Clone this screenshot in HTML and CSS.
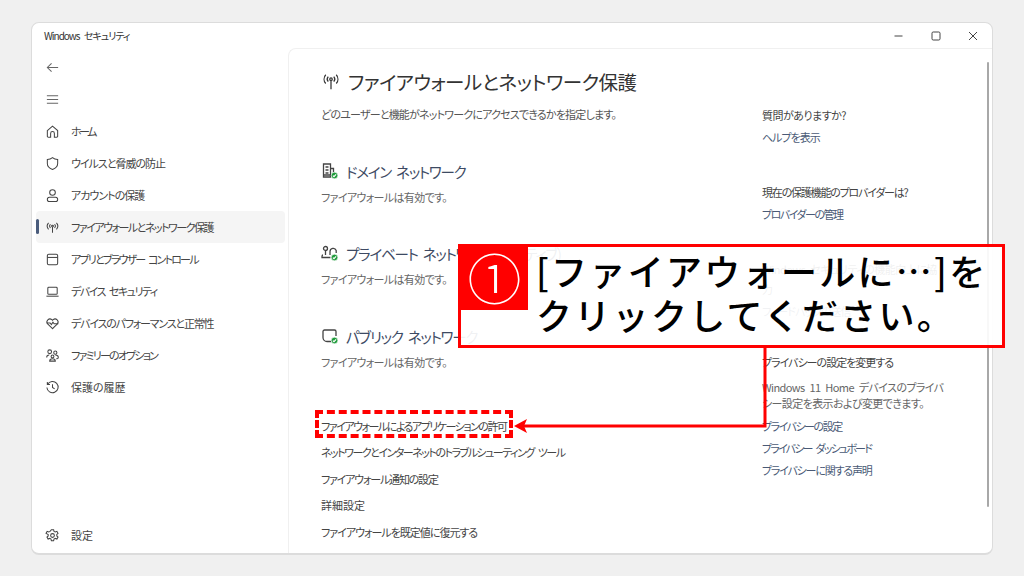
FILE: index.html
```html
<!DOCTYPE html>
<html lang="ja">
<head>
  <meta charset="UTF-8"/>
  <title>Windows セキュリティ</title>
  <link rel="stylesheet" href="styles.css">
</head>
<body>

<div class="window">
  <!-- title bar -->
  <header class="titlebar">
    <span class="app-title">Windows セキュリティ</span>
    <div class="controls">
      <svg class="ctl" viewBox="0 0 12 12"><path d="M1.500 6h8"/></svg>
      <svg class="ctl" viewBox="0 0 12 12"><rect x="2" y="2" width="8" height="8" rx="1.200"/></svg>
      <svg class="ctl" viewBox="0 0 12 12"><path d="M2 2l8 8M10 2l-8 8"/></svg>
    </div>
  </header>

  <div class="body">
    <!-- sidebar -->
    <nav class="sidebar">
      <div class="nav-row"><svg class="ico thin" viewBox="0 0 16 16"><path d="M14 8H3M7 3.500L2.500 8 7 12.500"/></svg></div>
      <div class="nav-row"><svg class="ico thin" viewBox="0 0 16 16"><path d="M2 4h12M2 8h12M2 12h12"/></svg></div>
      <div class="nav-row"><svg class="ico" viewBox="0 0 16 16"><path d="M2.500 7L8 2.200 13.500 7v6a1.200 1.200 0 0 1-1.200 1.200H10V10a2 2 0 0 0-4 0v4.200H3.700A1.200 1.200 0 0 1 2.500 13z"/></svg><span class="ls25">ホーム</span></div>
      <div class="nav-row"><svg class="ico" viewBox="0 0 16 16"><path d="M8 1.800c1.600 1.300 3.400 1.900 5.500 2V8c0 3-2 5-5.500 6.300C4.500 13 2.500 11 2.500 8V3.800c2.100-.1 3.900-.7 5.500-2z"/></svg><span class="ls10">ウイルスと脅威の防止</span></div>
      <div class="nav-row"><svg class="ico" viewBox="0 0 16 16"><circle cx="8" cy="4.800" r="3"/><rect x="2.500" y="9.800" width="11" height="4.700" rx="2.300"/></svg><span class="ls10">アカウントの保護</span></div>
      <div class="nav-row active"><svg class="ico" viewBox="0 0 16 16"><circle cx="8" cy="6.500" r="1"/><path d="M8 7.500v6M5.800 4.500a3 3 0 0 0 0 4M10.200 4.500a3 3 0 0 1 0 4M3.800 3a5.300 5.300 0 0 0 0 7M12.200 3a5.300 5.300 0 0 1 0 7"/></svg><span class="ls15">ファイアウォールとネットワーク保護</span></div>
      <div class="nav-row"><svg class="ico" viewBox="0 0 16 16"><rect x="2.500" y="2.500" width="11" height="11" rx="1.500"/><path d="M2.500 5.800h11"/></svg><span class="ls18">アプリとブラウザー コントロール</span></div>
      <div class="nav-row"><svg class="ico" viewBox="0 0 16 16"><rect x="3" y="3.500" width="10" height="7.500" rx="1"/><path d="M1.500 13h13"/></svg><span class="ls15">デバイス セキュリティ</span></div>
      <div class="nav-row"><svg class="ico" viewBox="0 0 16 16"><path d="M8 13.500L2.800 8.400a3.200 3.200 0 0 1 4.500-4.500l.7.700.7-.7a3.200 3.200 0 0 1 4.500 4.500z"/><path d="M1.800 7.500h3.700l1.300 1.700 1.700-2.600 1.200 1.600h4.500"/></svg><span class="ls12">デバイスのパフォーマンスと正常性</span></div>
      <div class="nav-row"><svg class="ico" viewBox="0 0 16 16"><circle cx="5" cy="4" r="2"/><circle cx="11" cy="5" r="1.700"/><circle cx="8" cy="9" r="1.500"/><path d="M1.800 10c0-1.500 1-2.500 2.700-2.500M5 14c0-1.500 1.300-2.500 3-2.500s3 1 3 2.500zM11 7.500c2 0 3.200 1 3.200 2.500 0 1-1 1.500-2.200 1.500"/></svg><span class="ls18">ファミリーのオプション</span></div>
      <div class="nav-row"><svg class="ico" viewBox="0 0 16 16"><path d="M2.800 4.500A6 6 0 1 1 2 8M2.500 2v2.800h2.800M8 4.500V8l2.300 1.500"/></svg><span>保護の履歴</span></div>
      <div class="nav-row settings"><svg class="ico" viewBox="0 0 16 16"><circle cx="8" cy="8" r="2"/><path d="M6.800 1.800h2.400l.4 1.800 1.400.7 1.700-.7 1.200 2.100-1.300 1.200v1.600l1.300 1.200-1.200 2.100-1.700-.7-1.400.7-.4 1.800H6.800l-.4-1.800-1.400-.7-1.700.7-1.200-2.100 1.300-1.200V6.900L1.100 5.700l1.200-2.100 1.700.7 1.400-.7z"/></svg><span>設定</span></div>
    </nav>

    <!-- page -->
    <main class="panel">
      <div class="col-main">
        <h1 class="page-title">
          <svg class="title-ico" viewBox="0 0 16 16"><circle cx="8" cy="6.500" r="1"/><path d="M8 7.500v7M5.800 4.500a3 3 0 0 0 0 4M10.200 4.500a3 3 0 0 1 0 4M3.800 3a5.300 5.300 0 0 0 0 7M12.200 3a5.300 5.300 0 0 1 0 7"/></svg>
          <span>ファイアウォールとネットワーク保護</span>
        </h1>
        <p class="desc">どのユーザーと機能がネットワークにアクセスできるかを指定します。</p>

        <section class="net net-first">
          <h2>
            <svg class="net-ico" viewBox="0 0 18 18"><path d="M2.500 2h7v13h-7zM9.500 6.500h3v4"/><path d="M4.500 5h3M4.500 8h3M4.500 11h3M2.500 13h7"/><circle class="ok" cx="13.500" cy="13.500" r="3.300"/><path class="tick" d="M11.900 13.600l1.100 1.100 2.100-2.300"/></svg>
            <span>ドメイン ネットワーク</span>
          </h2>
          <p class="sub">ファイアウォールは有効です。</p>
        </section>
        <section class="net">
          <h2>
            <svg class="net-ico" viewBox="0 0 18 18"><circle cx="4.500" cy="4.500" r="2"/><path d="M4.500 6.500v4.500M2 11c-.8 0-1 .6-1 1.500v1h8.500M9 11V7.500a3.200 3.200 0 0 1 6.200-1V9"/><circle class="ok" cx="13.500" cy="13.500" r="3.300"/><path class="tick" d="M11.900 13.600l1.100 1.100 2.100-2.300"/></svg>
            <span>プライベート ネットワーク (アクティブ)</span>
          </h2>
          <p class="sub">ファイアウォールは有効です。</p>
        </section>
        <section class="net">
          <h2>
            <svg class="net-ico" viewBox="0 0 18 18"><path d="M10 14.500H6A4 4 0 0 1 2 10.500V4.500A1.500 1.500 0 0 1 3.500 3h10A1.500 1.500 0 0 1 15 4.500V9"/><circle class="ok" cx="13.500" cy="13.500" r="3.300"/><path class="tick" d="M11.900 13.600l1.100 1.100 2.100-2.300"/></svg>
            <span>パブリック ネットワーク</span>
          </h2>
          <p class="sub">ファイアウォールは有効です。</p>
        </section>

        <ul class="links">
          <li class="ls15">ファイアウォールによるアプリケーションの許可</li>
          <li class="ls15">ネットワークとインターネットのトラブルシューティング ツール</li>
          <li class="ls12">ファイアウォール通知の設定</li>
          <li>詳細設定</li>
          <li class="ls10">ファイアウォールを既定値に復元する</li>
        </ul>
      </div>

      <aside class="col-side">
        <h3 class="ls5">質問がありますか?</h3>
        <a class="ls10">ヘルプを表示</a>
        <h3 class="gap ls12">現在の保護機能のプロバイダーは?</h3>
        <a class="ls15">プロバイダーの管理</a>
        <h3 class="gap ls5">Windows セキュリティの機能向上に協<br>力</h3>
        <a class="ls10">フィードバックの送信</a>
        <h3 class="gap-sm ls10">プライバシーの設定を変更する</h3>
        <p class="side-text">Windows 11 Home デバイスのプライバ<br>シー設定を表示および変更できます。</p>
        <a class="ls15">プライバシーの設定</a>
        <a class="ls18">プライバシー ダッシュボード</a>
        <a class="ls12">プライバシーに関する声明</a>
      </aside>

      <div class="scrollbar"></div>
    </main>
  </div>
</div>

<!-- annotation on top of the screenshot -->
<div class="callout">
  <div class="badge">①</div>
  <p class="callout-text">[ファイアウォールに…]を<br>クリックしてください。</p>
</div>
<div class="dash-box"></div>
<svg class="arrow" viewBox="0 0 270 90"><path class="shaft" d="M252 0v78H10"/><path class="head" d="M1 78l13-7-3 7 3 7z"/></svg>

</body>
</html>
```

FILE: styles.css
```css
*{box-sizing:border-box}
html,body{margin:0;height:100%}
body{position:relative;width:1024px;height:576px;overflow:hidden;background:#f0f0f0;padding:22px 31px 21px 31px;font-family:"Noto Sans CJK JP","Noto Sans",sans-serif;font-size:11px;word-spacing:3px;color:#333;font-feature-settings:"palt"}
h1,h2,h3,p,ul{margin:0;padding:0;font-weight:400}

/* tracking, the original face has narrow kana */
.ls5{letter-spacing:-.5px}
.ls10{letter-spacing:-1px}
.ls12{letter-spacing:-1.200px}
.ls15{letter-spacing:-1.500px}
.ls18{letter-spacing:-1.800px}
.ls25{letter-spacing:-2.500px}

/* window */
.window{height:100%;display:flex;flex-direction:column;background:#fff;border:1px solid #dcdcdc;border-bottom-width:2px;border-radius:8px;overflow:hidden}
.titlebar{height:25px;flex:none;display:flex;align-items:center;justify-content:space-between;padding:0 0 0 12px}
.app-title{font-size:10px;letter-spacing:-1px;color:#333}
.controls{display:flex;gap:25px;padding-right:13px}
.ctl{width:12px;height:12px;fill:none;stroke:#444;stroke-width:1}
.body{flex:1;display:flex;min-height:0}

/* sidebar */
.sidebar{width:256px;flex:none;display:flex;flex-direction:column;padding:3px 3px 2px 4px}
.nav-row{height:32px;flex:none;display:flex;align-items:center;gap:11px;padding-left:9px;position:relative;color:#444;border-radius:4px}
.nav-row.active{background:#f5f5f5}
.nav-row.active::before{content:"";position:absolute;left:0;top:8px;width:3px;height:15px;border-radius:2px;background:#4a5c7c}
.nav-row.settings{margin-top:auto}
.ico{width:15px;height:15px;flex:none;fill:none;stroke:#444;stroke-width:1.100}
.ico.thin{stroke:#666}

/* main panel */
.panel{flex:1;position:relative;display:flex;border:1px solid #f0f0f0;border-width:1px 0 0 1px;border-top-left-radius:8px;min-width:0}
.col-main{width:473px;flex:none;padding-left:32px}
.page-title{height:40px;margin-top:12px;display:flex;align-items:center;gap:7px;font-size:19.500px;letter-spacing:-.5px;color:#333;white-space:nowrap}
.title-ico{width:20px;height:20px;fill:none;stroke:#333;stroke-width:1}
.desc{height:20px;line-height:20px;margin-top:3px;color:#555;letter-spacing:-.8px;white-space:nowrap}
.net{margin-top:34px}
.net-first{margin-top:35px}
.net:last-of-type{margin-top:35px}
.net h2{height:24px;display:flex;align-items:center;gap:7px;font-size:14.500px;letter-spacing:-1.200px;color:#3d4a63;white-space:nowrap}
.net-ico{width:18px;height:18px;flex:none;fill:none;stroke:#444;stroke-width:1.300}
.net-ico .ok{fill:#1f9b3b;stroke:#fff;stroke-width:.6}
.net-ico .tick{stroke:#fff;stroke-width:1.200}
.sub{height:20px;line-height:20px;margin-top:4px;color:#666;letter-spacing:-.65px}
.links{list-style:none;margin-top:41px;color:#444}
.links li{height:26.400px;line-height:26.400px;white-space:nowrap}

/* right column */
.col-side{width:200px;flex:none;padding-top:56px;display:flex;flex-direction:column}
.col-side h3{font-size:11px;line-height:20px;color:#444;white-space:nowrap}
.col-side h3.gap{margin-top:35px}
.col-side h3.gap-sm{margin-top:31px}
.col-side a{line-height:20px;margin-top:2px;color:#4a5a76;white-space:nowrap}
.side-text{line-height:16px;margin:7px 0 3px;color:#666;letter-spacing:-.6px;white-space:nowrap}
.scrollbar{position:absolute;right:3px;top:13px;width:2.500px;height:445px;border-radius:2px;background:#a8a8a8}

/* annotation */
.callout{position:absolute;left:458px;top:244px;width:547px;height:104px;border:3px solid #f00;background:rgba(255,255,255,.92);display:flex;align-items:flex-start;word-spacing:0}
.badge{width:67px;height:63px;flex:none;background:#f00;color:#fff;font-size:54px;font-weight:300;line-height:60px;text-align:center;font-feature-settings:normal}
.callout-text{margin:1px 0 0 8px;font-size:36px;line-height:44px;font-weight:500;color:#000;letter-spacing:2.300px;white-space:nowrap;font-feature-settings:normal}
.dash-box{position:absolute;left:315px;top:410px;width:198px;height:28px;border:4px dashed #f00}
.arrow{position:absolute;left:513px;top:348px;width:270px;height:90px;overflow:visible}
.shaft{fill:none;stroke:#f00;stroke-width:3}
.head{fill:#f00}
```
